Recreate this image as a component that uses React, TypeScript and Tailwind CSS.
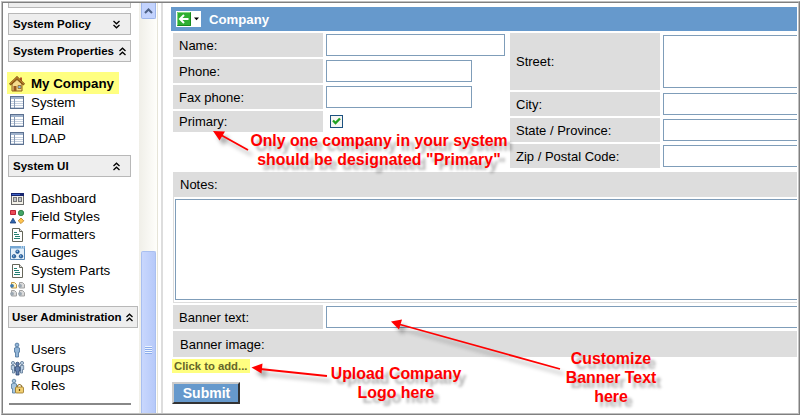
import type { ReactNode } from "react";

function Chevrons({ up = false }: { up?: boolean }) {
  return (
    <svg width="9" height="9" viewBox="0 0 9 9" className={up ? "" : "rotate-180"}>
      <path d="M1.5 4 4.5 1.2 7.5 4M1.5 8 4.5 5.2 7.5 8" fill="none" stroke="#000" strokeWidth="1.3" />
    </svg>
  );
}

function PanelHeader({ title, up = false, className }: { title: string; up?: boolean; className: string }) {
  return (
    <div
      className={`flex h-[22px] shrink-0 items-center justify-between border border-[#b8b8b8] bg-[#eeeeee] text-[11.5px] font-bold leading-none text-black ${className}`}
    >
      <span className="whitespace-nowrap pt-px">{title}</span>
      <Chevrons up={up} />
    </div>
  );
}

function Item({ icon, label, active = false }: { icon: ReactNode; label: string; active?: boolean }) {
  return (
    <div
      className={`flex shrink-0 items-center gap-[6px] pl-[2px] text-[13.33px] leading-[18px] text-black ${
        active ? "h-[22px] w-[112px] bg-[#ffff80] pt-px font-bold" : "h-[18px]"
      }`}
    >
      <svg width="16" height="16" viewBox="0 0 16 16" className="shrink-0">
        {icon}
      </svg>
      <span className="whitespace-nowrap">{label}</span>
    </div>
  );
}

const house = (
  <g>
    <path d="M3 8 8 3.5 13 8V15H3Z" fill="#f6dc8c" stroke="#8a5a14" strokeWidth="1" />
    <path d="M11 1.5h2V5h-2z" fill="#b5502c" />
    <path d="M.8 8.6 8 1.6l7.2 7" fill="none" stroke="#7b4a10" strokeWidth="2.4" />
    <path d="M1.2 8 8 1.5 14.8 8" fill="none" stroke="#d99a35" strokeWidth="1" />
    <path d="M4.5 10h3v5h-3z" fill="#9a5a1e" />
    <path d="M9 9.5h3v3H9z" fill="#8db6d8" stroke="#8a5a14" strokeWidth=".7" />
  </g>
);

const table = (
  <g shapeRendering="crispEdges">
    <path d="M1 1h14v13H1z" fill="#5c7191" />
    <path d="M2 4h12v9H2z" fill="#fff" />
    <path d="M2 2h12v2H2z" fill="#9fb2cc" />
    <path d="M2 6h12v1H2zM2 8h12v1H2zM2 10h12v1H2zM2 12h12v1H2z" fill="#c5d0df" />
    <path d="M5 4h1v9H5z" fill="#8799b3" />
  </g>
);

const dashboard = (
  <g shapeRendering="crispEdges">
    <path d="M2 2h13v12H2z" fill="#6b6b6b" />
    <path d="M2 2h13v3H2z" fill="#17266f" />
    <path d="M3 3h8v1H3z" fill="#3c62c4" />
    <path d="M3 5h11v8H3z" fill="#f3f1e8" />
    <path d="M4 6h4v5H4zM9 6h4v5H9z" fill="#777" />
    <path d="M5 7h2v3H5zM10 7h2v3h-2z" fill="#bfc3c8" />
  </g>
);

const shapes = (
  <g>
    <path d="M1.5 1.5h5v4h-5z" fill="#ea4b58" stroke="#bd2335" />
    <circle cx="12" cy="4" r="2.7" fill="#43a567" stroke="#23753e" strokeWidth=".8" />
    <path d="M4 9.2 6.8 14H1.2Z" fill="#3166ae" stroke="#173d7b" strokeWidth=".8" />
    <path d="m12 9 2.8 2.8L12 14.6l-2.8-2.8Z" fill="#ffc44e" stroke="#b57a1b" strokeWidth=".8" />
  </g>
);

const page = (
  <g>
    <path d="M3.500 1.500h7l3 3v10h-10z" fill="#fff" stroke="#65665a" />
    <path d="M10.500 1.500v3h3" fill="#ddd" stroke="#65665a" />
    <path d="M5 5.500h3M5 7.500h5M6 9.500h5M5 11.500h6" stroke="#258072" strokeWidth="1" />
  </g>
);

const gauges = (
  <g>
    <path d="M1.5 1.5h14v13h-14z" fill="#e4f0fa" stroke="#5787b5" />
    <path d="M1 1h15v2.5H1z" fill="#75a7d3" />
    <path d="M12 2h1M14 2h1" stroke="#fff" />
    <g fill="#2563a8" stroke="#174779" strokeWidth=".6">
      <circle cx="8.5" cy="6.7" r="1.8" />
      <circle cx="5" cy="11.3" r="1.8" />
      <circle cx="12" cy="11.3" r="1.8" />
    </g>
    <g fill="#b9d9f5">
      <circle cx="8.2" cy="6.3" r=".7" />
      <circle cx="4.7" cy="10.9" r=".7" />
      <circle cx="11.7" cy="10.9" r=".7" />
    </g>
  </g>
);

const uiStyles = (
  <g>
    <path d="M2.500 1.500h3l2 2v3.500h-5z" fill="#fff4c4" stroke="#c39b46" />
    <path d="M10.500 1.500h3l2 2v3.500h-5zM2.500 9.500h3l2 2v3.500h-5zM10.500 9.500h3l2 2v3.500h-5z" fill="#dadada" stroke="#a2a2a2" />
    <circle cx="3" cy="4.800" r="1.900" fill="#3c79b0" />
    <circle cx="11" cy="4.800" r="1.900" fill="#9ba7b1" />
    <circle cx="3" cy="12.800" r="1.900" fill="#9ba7b1" />
    <circle cx="11" cy="12.800" r="1.900" fill="#9ba7b1" />
  </g>
);

const user = (
  <g fill="#92b5d7" stroke="#4a729b" strokeWidth=".8">
    <circle cx="8" cy="3" r="1.9" />
    <path d="M5.5 6q2.5-1.6 5 0v4.2H9.5V15h-3v-4.8h-1Z" />
  </g>
);

const groups = (
  <g strokeWidth=".8">
    <g fill="#b9cde2" stroke="#5d7794">
      <circle cx="4" cy="3" r="1.6" />
      <circle cx="13" cy="3" r="1.6" />
      <path d="M2.3 5.5h3.2V13h-2V9.5H2.3ZM11.5 5.5h3.2v4h-1.2V13h-2Z" />
    </g>
    <g fill="#6581ad" stroke="#29426d">
      <circle cx="8.5" cy="4" r="1.8" />
      <path d="M6 7q2.5-1.4 5 0v4h-1v4H7v-4H6Z" />
    </g>
  </g>
);

const roles = (
  <g strokeWidth=".8">
    <g fill="#a9c6df" stroke="#517899">
      <circle cx="5" cy="3" r="1.8" />
      <path d="M2.5 6q2.5-1.6 5 0v4.5h-1V15h-3v-4.5h-1Z" />
    </g>
    <path d="M8.3 9.5V8q2.2-3 4.4 0v1.5" fill="none" stroke="#8d6e26" strokeWidth="1.2" />
    <rect x="6.5" y="9" width="8" height="6" rx="1" fill="#f2cf72" stroke="#977323" />
    <path d="M10.5 11v2" stroke="#614611" strokeWidth="1.2" />
  </g>
);

function Sidebar() {
  return (
    <aside className="flex w-[136px] shrink-0 flex-col overflow-hidden pl-[5px]">
      <div className="h-[5px] w-[123px] shrink-0 border border-t-0 border-[#b8b8b8] bg-[#eeeeee]" />
      <PanelHeader title="System Policy" className="mt-[5px] w-[123px] pl-1 pr-[9px]" />
      <PanelHeader title="System Properties" up className="mt-[5px] w-[123px] pl-1 pr-[3px]" />
      <nav className="-ml-px mt-[10px] flex flex-col">
        <Item active icon={house} label="My Company" />
        <Item icon={table} label="System" />
        <Item icon={table} label="Email" />
        <Item icon={table} label="LDAP" />
      </nav>
      <PanelHeader title="System UI" up className="mt-[7px] w-[123px] pl-1 pr-[9px]" />
      <nav className="-ml-px mt-[13px] flex flex-col">
        <Item icon={dashboard} label="Dashboard" />
        <Item icon={shapes} label="Field Styles" />
        <Item icon={page} label="Formatters" />
        <Item icon={gauges} label="Gauges" />
        <Item icon={page} label="System Parts" />
        <Item icon={uiStyles} label="UI Styles" />
      </nav>
      <PanelHeader title="User Administration" up className="mt-[8px] w-[130px] pl-[3px] pr-[3px]" />
      <nav className="-ml-px mt-[13px] flex flex-col">
        <Item icon={user} label="Users" />
        <Item icon={groups} label="Groups" />
        <Item icon={roles} label="Roles" />
      </nav>
      <div className="ml-px mt-2 h-[2px] w-[122px] shrink-0 bg-[#888888]" />
    </aside>
  );
}

function Scrollbar() {
  return (
    <div className="flex w-[19px] shrink-0 flex-col border-r border-[#e6e4d8] bg-gradient-to-r from-[#f0efe8] to-[#fefefb] pl-[2px] pr-px">
      <div className="flex h-[16px] shrink-0 items-center justify-center rounded-b-[2px] border border-t-0 border-[#9db5ea] bg-[#c3d3fd]">
        <svg width="9" height="6" viewBox="0 0 9 6">
          <path d="M1 5 4.5 1.5 8 5" fill="none" stroke="#4d6185" strokeWidth="2" />
        </svg>
      </div>
      <div className="mt-[232px] flex flex-1 flex-col items-center rounded-t-[2px] border border-b-0 border-[#a9bff0] bg-gradient-to-r from-[#c9d7fd] to-[#b6c9f9] pt-[94px]">
        <div className="h-[8px] w-[7px] bg-[repeating-linear-gradient(to_bottom,#eef4fe_0px,#eef4fe_1px,#8caceb_1px,#8caceb_2px)]" />
      </div>
    </div>
  );
}

const box = "border border-[#7f9db9] bg-white";
const label = "flex items-center bg-[#dddddd] text-[13px] leading-none text-black";

function Field({ name, width }: { name: string; width: string }) {
  return (
    <div className="flex h-[24px] items-center gap-[3px]">
      <div className={`${label} h-[24px] w-[150px] pl-[6px]`}>{name}</div>
      <div className={`${box} h-[22px] ${width}`} />
    </div>
  );
}

function AddressField({ name, tall = false }: { name: string; tall?: boolean }) {
  return (
    <div className={`flex items-center gap-[3px] ${tall ? "h-[57px]" : "h-[24px]"}`}>
      <div className={`${label} w-[150px] self-stretch pl-[6px]`}>{name}</div>
      <div className={`${box} flex-1 border-r-0 ${tall ? "h-[53px]" : "h-[22px]"}`} />
    </div>
  );
}

function Main() {
  return (
    <main className="flex min-w-0 flex-1 flex-col pl-2 pt-1">
      <header className="flex h-[24px] shrink-0 items-center bg-[#6699cc] pl-[5px] text-white">
        <div className="flex h-[16px] w-[25px] items-center bg-white">
          <svg width="25" height="16" viewBox="0 0 25 16">
            <rect x="1" y="1" width="14" height="14" fill="#2fae32" />
            <path d="M1.5 14.5v-13h13" fill="none" stroke="#7fd77c" />
            <path d="M14.5 1.5v13h-13" fill="none" stroke="#168a1c" />
            <path d="M12.5 8H4.5M8 4 4 8l4 4" fill="none" stroke="#fff" strokeWidth="2" />
            <path d="M18 6.5h5L20.500 9.300Z" fill="#000" />
          </svg>
        </div>
        <span className="ml-2 pt-px text-[13.2px] font-bold leading-none">Company</span>
      </header>

      <div className="ml-[2px] mt-[2px] flex h-[139px] shrink-0">
        <div className="flex w-[337px] flex-col gap-[2px]">
          <Field name="Name:" width="w-[179px]" />
          <Field name="Phone:" width="w-[146px]" />
          <Field name="Fax phone:" width="w-[146px]" />
          <div className="flex h-[21px] items-center">
            <div className={`${label} h-[21px] w-[150px] pl-[6px]`}>Primary:</div>
            <div className="ml-[7px] flex h-[13px] w-[13px] items-center justify-center border border-[#1c5180] bg-[#f6f6f3]">
              <svg width="9" height="9" viewBox="0 0 9 9">
                <path d="M1 3.500 3.500 6 8 1.500" fill="none" stroke="#21a121" strokeWidth="2.300" />
              </svg>
            </div>
          </div>
        </div>
        <div className="flex flex-1 flex-col gap-[2px]">
          <AddressField name="Street:" tall />
          <AddressField name="City:" />
          <AddressField name="State / Province:" />
          <AddressField name="Zip / Postal Code:" />
        </div>
      </div>

      <div className="ml-[2px] flex shrink-0 flex-col">
        <div className={`${label} h-[25px] pl-[7px]`}>Notes:</div>
        <div className="h-[106px] border-b border-l border-[#dddddd] pb-[2px] pl-px pt-[2px]">
          <div className={`${box} h-[101px] border-r-0`} />
        </div>
        <div className="mt-[2px] flex h-[24px] items-center gap-[3px]">
          <div className={`${label} h-[24px] w-[150px] pl-[6px]`}>Banner text:</div>
          <div className={`${box} h-[22px] flex-1 border-r-0`} />
        </div>
        <div className={`${label} mt-[2px] h-[26px] pl-[7px]`}>Banner image:</div>
      </div>

      <a className="ml-px mt-[2px] flex h-[14px] w-[78px] shrink-0 items-center whitespace-nowrap bg-[#ffff80] pl-[2px] pt-px text-[11.3px] font-bold leading-none text-[#66662a]">
        Click to add...
      </a>
      <button className="ml-px mt-[9px] flex h-[22px] w-[68px] shrink-0 items-center justify-center border-2 border-b-[#333333] border-l-[#cccccc] border-r-[#333333] border-t-[#cccccc] bg-[#6699cc] pl-px text-[14px] font-bold leading-none text-white">
        Submit
      </button>
    </main>
  );
}

const note =
  "absolute whitespace-nowrap text-center font-bold leading-[19px] text-[#ff0000] [text-shadow:5px_5px_3px_rgba(0,0,0,0.3)]";

function Annotations() {
  return (
    <>
      <svg
        className="absolute left-0 top-0 [filter:drop-shadow(4px_5px_2px_rgba(0,0,0,0.35))]"
        width="800"
        height="415"
        viewBox="0 0 800 415"
      >
        <g stroke="#ff0000" strokeWidth="1.8">
          <path d="M248 150 221 135" />
          <path d="M327 376 260 369" />
          <path d="M560 369 400 324.500" />
        </g>
        <g fill="#ff0000">
          <path d="M213 131 225 131.500 219.500 140.500Z" />
          <path d="M251.500 367.500 262.500 363.500 261.500 373.500Z" />
          <path d="M391 321.500 402 319.500 399 329.500Z" />
        </g>
      </svg>
      <div className={`${note} left-[249px] top-[131px] w-[260px] text-[15.8px]`}>
        Only one company in your system
        <br />
        <span className="tracking-[0.1px]">should be designated "Primary"</span>
      </div>
      <div className={`${note} left-[326px] top-[364px] w-[140px] text-[15.9px]`}>
        Upload Company
        <br />
        Logo here
      </div>
      <div className={`${note} left-[561px] top-[349px] w-[100px] text-[15.9px]`}>
        Customize
        <br />
        Banner Text
        <br />
        here
      </div>
    </>
  );
}

export default function App() {
  return (
    <div className="relative h-[415px] w-[800px] overflow-hidden bg-white font-['Liberation_Sans',Arial,sans-serif]">
      <div className="flex h-full pl-px pt-px">
        <div className="flex w-full border border-b-[#808080] border-l-[#c0c0c0] border-r-[#808080] border-t-[#c0c0c0]">
          <div className="flex w-full border border-b-[#c0c0c0] border-l-[#808080] border-r-[#c0c0c0] border-t-[#808080] pr-px">
            <Sidebar />
            <Scrollbar />
            <div className="ml-[3px] w-[2px] shrink-0 bg-[#dddddd]" />
            <Main />
          </div>
        </div>
      </div>
      <Annotations />
    </div>
  );
}
